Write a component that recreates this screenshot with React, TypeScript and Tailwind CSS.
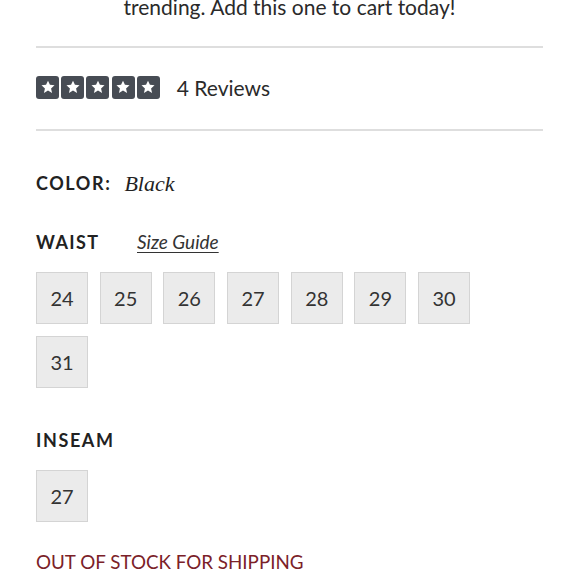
import React from "react";

const Star = () => (
  <div className="w-[23px] h-[23px] bg-[#474c54] rounded-[3px] flex items-center justify-center">
    <svg viewBox="0 0 24 24" width="16" height="16">
      <path
        fill="#fff"
        d="M12 2.5l2.9 6.3 6.9.7-5.2 4.6 1.5 6.8L12 17.4l-6.1 3.5 1.5-6.8-5.2-4.6 6.9-.7z"
      />
    </svg>
  </div>
);

const SizeBox = ({ v }: { v: string }) => (
  <div className="w-[52px] h-[52px] bg-[#ebebeb] border border-[#d4d4d4] flex items-center justify-center text-[20px] text-[#333]">
    {v}
  </div>
);

export default function App() {
  return (
    <div
      className="w-[579px] h-[580px] overflow-hidden bg-white text-[#222]"
      style={{ fontFamily: "Lato, 'Open Sans', sans-serif" }}
    >
      <div className="px-[36px]">
        <div className="mt-[-7px] text-center text-[21px] leading-[28px] text-[#2a2a2a]">
          trending. Add this one to cart today!
        </div>
        <div className="mt-[25px] h-[2px] bg-[#dedede]" />
        <div className="h-[81px] flex items-center pb-[3px]">
          <div className="flex gap-[2.2px]">
            <Star />
            <Star />
            <Star />
            <Star />
            <Star />
          </div>
          <span className="ml-[17px] text-[21px] text-[#2a2a2a] mt-[1px]">4 Reviews</span>
        </div>
        <div className="h-[2px] bg-[#dedede]" />
        <div className="mt-[38px] flex items-center h-[28px]">
          <span className="font-bold text-[18px] tracking-[1.6px] text-[#222]">COLOR:</span>
          <span
            className="ml-[13px] italic text-[22px] text-[#222]"
            style={{ fontFamily: "'Liberation Serif', serif" }}
          >
            Black
          </span>
        </div>
        <div className="mt-[31px] flex items-center h-[28px]">
          <span className="font-bold text-[18px] tracking-[1.4px] text-[#222] w-[101px]">WAIST</span>
          <span className="italic underline text-[19px] text-[#333] underline-offset-[3px]">Size Guide</span>
        </div>
        <div className="mt-[16px] flex flex-wrap gap-x-[11.7px] gap-y-[12px] w-[460px]">
          {["24", "25", "26", "27", "28", "29", "30", "31"].map((v) => (
            <SizeBox key={v} v={v} />
          ))}
        </div>
        <div className="mt-[38px] h-[28px] flex items-center">
          <span className="font-bold text-[18px] tracking-[1.6px] text-[#222]">INSEAM</span>
        </div>
        <div className="mt-[16px] flex">
          <SizeBox v="27" />
        </div>
        <div className="mt-[26px] text-[18.8px] text-[#7b2128] leading-[28px]">OUT OF STOCK FOR SHIPPING</div>
      </div>
    </div>
  );
}
